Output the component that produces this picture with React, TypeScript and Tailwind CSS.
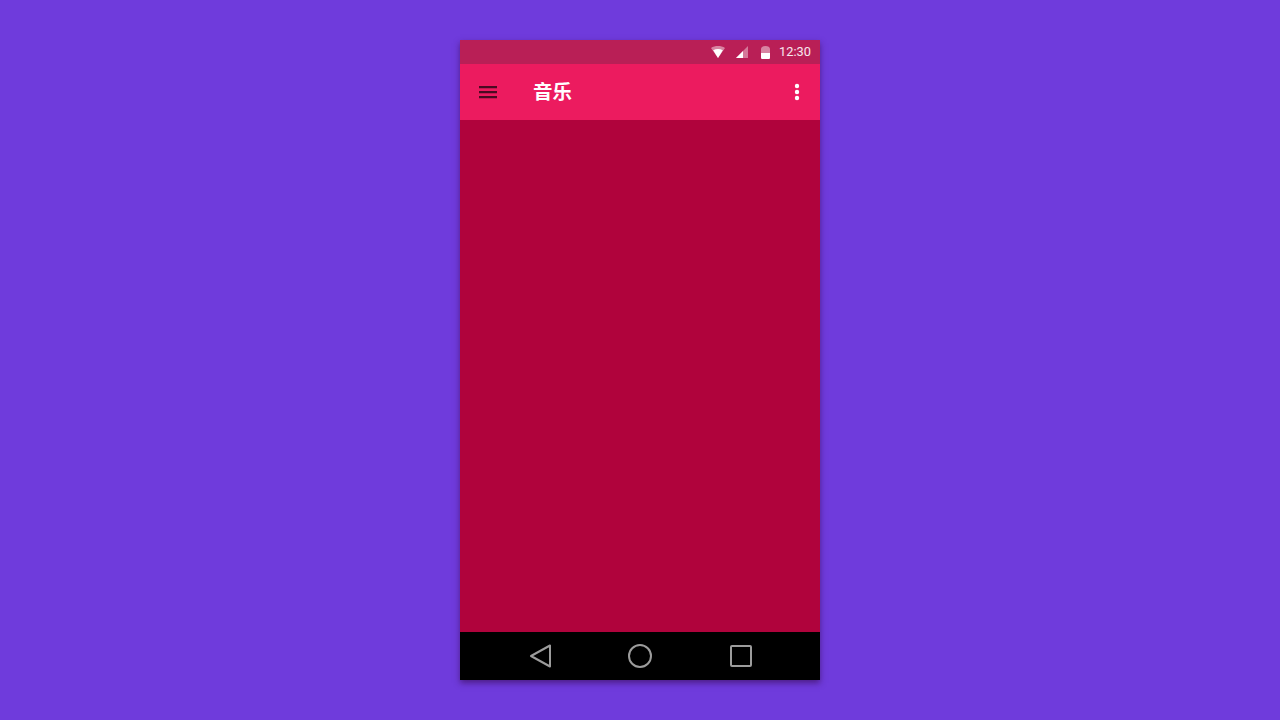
import React from "react";

const App: React.FC = () => {
  return (
    <div className="h-screen w-full bg-[#6f3bdc] flex items-center justify-center">
      {/* Phone */}
      <div className="w-[360px] h-[640px] flex flex-col bg-[#b0033c] shadow-[0_3px_6px_rgba(70,25,120,0.85)]">
        {/* Status bar */}
        <div className="h-6 bg-[#b91f56] flex items-center justify-end pr-[10px] shrink-0">
          <svg width="16" height="14" viewBox="0 0 16 14" className="mr-[10px]">
            <path d="M1 3 C5 0.4 11 0.4 15 3 L8 13 Z" fill="#ffffff" fillOpacity="0.45" />
            <path d="M3.2 5.2 C6 3.6 10 3.6 12.8 5.2 L8 13 Z" fill="#ffffff" />
          </svg>
          <svg width="12" height="12" viewBox="0 0 12 12" className="mr-[13px]">
            <path d="M0 12 L12 0 L12 12 Z" fill="#ffffff" fillOpacity="0.4" />
            <path d="M0 12 L7 5 L7 12 Z" fill="#ffffff" />
          </svg>
          <svg width="9" height="13" viewBox="0 0 9 13" className="mr-[9px]">
            <path d="M0 3 C0 1 2 0 4.5 0 C7 0 9 1 9 3 L9 7 L0 7 Z" fill="#ffffff" fillOpacity="0.45" />
            <path d="M0 7 L9 7 L9 11.5 C9 12.5 8.5 13 7.5 13 L1.5 13 C0.5 13 0 12.5 0 11.5 Z" fill="#ffffff" />
          </svg>
          <span className="w-[31px] mt-[1px] text-[12.8px] leading-none text-white/90 font-['Roboto',sans-serif]">12:30</span>
        </div>

        {/* Toolbar */}
        <div className="h-14 bg-[#ec1b5f] flex items-center shrink-0">
          <svg width="18" height="14" viewBox="0 0 18 14" className="ml-[19px]">
            <path d="M0 1 H18 V3.3 H0 Z M0 6 H18 V8.3 H0 Z M0 11 H18 V13.3 H0 Z" fill="#4a0a22" />
          </svg>
          <span className="ml-[36px] mb-[2px] text-[19.5px] leading-none font-bold text-white font-['Noto_Sans_CJK_SC',sans-serif]">
            音乐
          </span>
          <svg width="6" height="18" viewBox="0 0 6 18" className="ml-auto mr-[20px]">
            <circle cx="3" cy="3" r="2.2" fill="#ffffff" />
            <circle cx="3" cy="9" r="2.2" fill="#ffffff" />
            <circle cx="3" cy="15" r="2.2" fill="#ffffff" />
          </svg>
        </div>

        {/* Content */}
        <div className="flex-1" />

        {/* Navigation bar */}
        <div className="h-12 bg-black flex items-center justify-center shrink-0">
          <div className="w-[100px] flex justify-center">
            <svg width="24" height="24" viewBox="0 0 24 24" fill="none" stroke="#9c9c9c" strokeWidth="2" strokeLinejoin="round">
              <path d="M3 12 L22 1.5 L22 22.5 Z" />
            </svg>
          </div>
          <div className="w-[100px] flex justify-center">
            <svg width="24" height="24" viewBox="0 0 24 24" fill="none" stroke="#9c9c9c" strokeWidth="2">
              <circle cx="12" cy="12" r="11" />
            </svg>
          </div>
          <div className="w-[100px] flex justify-center">
            <svg width="24" height="24" viewBox="0 0 24 24" fill="none" stroke="#9c9c9c" strokeWidth="2" strokeLinejoin="round">
              <rect x="3" y="2" width="20" height="20" rx="1" />
            </svg>
          </div>
        </div>
      </div>
    </div>
  );
};

export default App;
